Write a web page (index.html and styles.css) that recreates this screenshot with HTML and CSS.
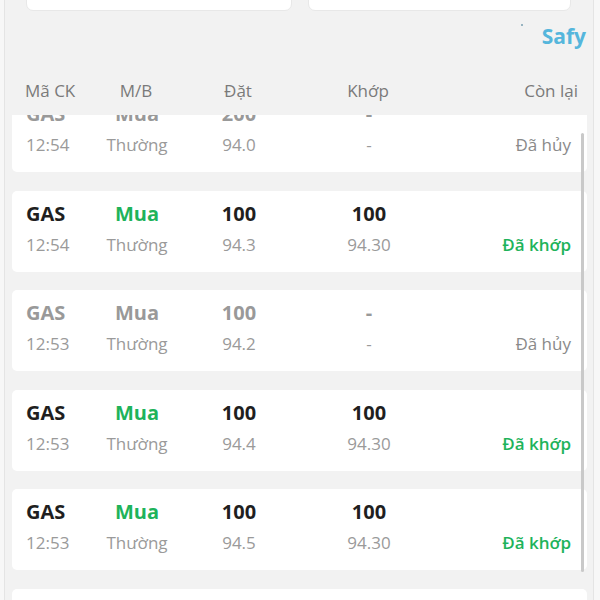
FILE: index.html
```html
<!DOCTYPE html>
<html>
<head>
    <title>Sổ lệnh</title>
    <link rel="stylesheet" href="styles.css">
</head>
<body>
    <div class="panel">
        <div class="filters">
            <div class="filter-box">Từ ngày</div>
            <div class="filter-box">Đến ngày</div>
        </div>

        <div class="brand-row">
            <span class="brand-dot"></span>
            <span class="brand">Safy</span>
        </div>

        <div class="head grid">
            <div>Mã CK</div>
            <div class="center">M/B</div>
            <div class="center">Đặt</div>
            <div class="center">Khớp</div>
            <div class="right">Còn lại</div>
        </div>

        <div class="list">
            <div class="list-inner">
                <div class="order cancelled">
                    <div class="grid top">
                        <div>GAS</div>
                        <div class="center">Mua</div>
                        <div class="center">200</div>
                        <div class="center">-</div>
                        <div></div>
                    </div>
                    <div class="grid sub">
                        <div>12:54</div>
                        <div class="center">Thường</div>
                        <div class="center">94.0</div>
                        <div class="center">-</div>
                        <div class="right status">Đã hủy</div>
                    </div>
                </div>

                <div class="order">
                    <div class="grid top">
                        <div>GAS</div>
                        <div class="center buy">Mua</div>
                        <div class="center">100</div>
                        <div class="center">100</div>
                        <div></div>
                    </div>
                    <div class="grid sub">
                        <div>12:54</div>
                        <div class="center">Thường</div>
                        <div class="center">94.3</div>
                        <div class="center">94.30</div>
                        <div class="right status matched">Đã khớp</div>
                    </div>
                </div>

                <div class="order cancelled">
                    <div class="grid top">
                        <div>GAS</div>
                        <div class="center">Mua</div>
                        <div class="center">100</div>
                        <div class="center">-</div>
                        <div></div>
                    </div>
                    <div class="grid sub">
                        <div>12:53</div>
                        <div class="center">Thường</div>
                        <div class="center">94.2</div>
                        <div class="center">-</div>
                        <div class="right status">Đã hủy</div>
                    </div>
                </div>

                <div class="order">
                    <div class="grid top">
                        <div>GAS</div>
                        <div class="center buy">Mua</div>
                        <div class="center">100</div>
                        <div class="center">100</div>
                        <div></div>
                    </div>
                    <div class="grid sub">
                        <div>12:53</div>
                        <div class="center">Thường</div>
                        <div class="center">94.4</div>
                        <div class="center">94.30</div>
                        <div class="right status matched">Đã khớp</div>
                    </div>
                </div>

                <div class="order">
                    <div class="grid top">
                        <div>GAS</div>
                        <div class="center buy">Mua</div>
                        <div class="center">100</div>
                        <div class="center">100</div>
                        <div></div>
                    </div>
                    <div class="grid sub">
                        <div>12:53</div>
                        <div class="center">Thường</div>
                        <div class="center">94.5</div>
                        <div class="center">94.30</div>
                        <div class="right status matched">Đã khớp</div>
                    </div>
                </div>

                <div class="order">
                    <div class="grid top">
                        <div>GAS</div>
                        <div class="center buy">Mua</div>
                        <div class="center">100</div>
                        <div class="center">100</div>
                        <div></div>
                    </div>
                    <div class="grid sub">
                        <div>12:53</div>
                        <div class="center">Thường</div>
                        <div class="center">94.5</div>
                        <div class="center">94.30</div>
                        <div class="right status matched">Đã khớp</div>
                    </div>
                </div>
            </div>
            <div class="scrollbar"></div>
        </div>
    </div>
</body>
</html>
```

FILE: styles.css
```css
body {
    margin: 0;
    background-color: #f7f7f7;
    font-family: "Open Sans", "Noto Sans", sans-serif;
}

.panel {
    width: 588px;
    height: 600px;
    margin-left: 4px;
    background-color: #f2f2f2;
    border-left: 1px solid #e4e4e4;
    border-right: 1px solid #e4e4e4;
    overflow: hidden;
}

.filters {
    display: flex;
    gap: 16px;
    padding: 0 21px;
    margin-top: -29px;
}

.filter-box {
    height: 40px;
    background-color: white;
    border: 1px solid #e8e8e8;
    border-radius: 7px;
    box-sizing: border-box;
    font-size: 15px;
    color: #444;
    text-align: center;
    line-height: 30px;
}

.filter-box:first-child {
    width: 266px;
}

.filter-box:last-child {
    width: 263px;
}

.brand-row {
    display: flex;
    justify-content: flex-end;
    margin-top: 11px;
    padding-right: 7px;
    height: 28px;
}

.brand-dot {
    width: 2px;
    height: 2px;
    margin-top: 2px;
    margin-right: 19px;
    background-color: #7a9fb0;
    border-radius: 50%;
}

.brand {
    font-size: 21px;
    font-weight: 700;
    color: #55b6dc;
    line-height: 28px;
}

.grid {
    display: grid;
    grid-template-columns: 70px 82px 122px 138px 1fr;
}

.center {
    text-align: center;
}

.right {
    text-align: right;
}

.head {
    margin-top: 29px;
    padding: 0 15px 0 20px;
    font-size: 17px;
    line-height: 24px;
    color: #7a7a7a;
}

.head > div:first-child {
    margin-right: -1px;
}

.list {
    position: relative;
    height: 485px;
    margin-top: 12px;
    overflow: hidden;
}

.list-inner {
    margin-top: -24px;
    padding: 0 6px 0 7px;
}

.order {
    height: 81px;
    margin-bottom: 18.5px;
    padding: 11px 16px 0 14px;
    box-sizing: border-box;
    background-color: white;
    border-radius: 5px;
}

.top {
    font-size: 20px;
    font-weight: 700;
    line-height: 24px;
    color: #1f1f1f;
}

.sub {
    margin-top: 7px;
    font-size: 17px;
    line-height: 24px;
    color: #9a9a9a;
}

.buy {
    color: #1eb35b;
}

.status {
    white-space: nowrap;
    color: #8a8a8a;
}

.status.matched {
    font-weight: 600;
    color: #1eb35b;
}

.cancelled .top {
    color: #999;
}

.scrollbar {
    position: absolute;
    top: 18px;
    left: 576px;
    width: 3px;
    height: 439px;
    background-color: #c9c9c9;
    border-radius: 2px;
}
```
